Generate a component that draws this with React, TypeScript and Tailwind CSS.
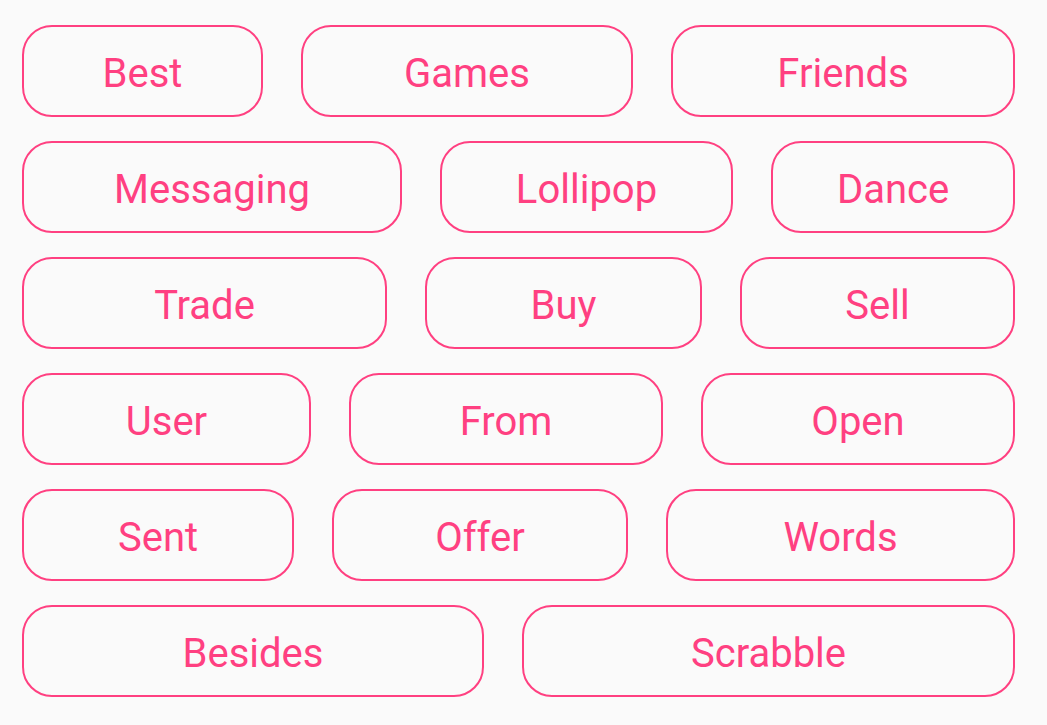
const rows: { label: string; w: string }[][] = [
  [
    { label: "Best", w: "w-[241px]" },
    { label: "Games", w: "w-[332px]" },
    { label: "Friends", w: "w-[344px]" },
  ],
  [
    { label: "Messaging", w: "w-[380px]" },
    { label: "Lollipop", w: "w-[293px]" },
    { label: "Dance", w: "w-[244px]" },
  ],
  [
    { label: "Trade", w: "w-[365px]" },
    { label: "Buy", w: "w-[277px]" },
    { label: "Sell", w: "w-[275px]" },
  ],
  [
    { label: "User", w: "w-[289px]" },
    { label: "From", w: "w-[314px]" },
    { label: "Open", w: "w-[314px]" },
  ],
  [
    { label: "Sent", w: "w-[272px]" },
    { label: "Offer", w: "w-[296px]" },
    { label: "Words", w: "w-[349px]" },
  ],
  [
    { label: "Besides", w: "w-[462px]" },
    { label: "Scrabble", w: "w-[493px]" },
  ],
];

export default function App() {
  return (
    <div className="min-h-screen bg-[#fafafa] pl-[22px] pt-[25px] font-['Roboto',sans-serif]">
      <div className="flex flex-col gap-[24px]">
        {rows.map((row, i) => (
          <div key={i} className="flex gap-[38px]">
            {row.map((chip) => (
              <button
                key={chip.label}
                className={`${chip.w} h-[92px] rounded-[30px] border-2 border-[#ff4081] text-[#ff4081] text-[40px] leading-none pt-[6px] flex items-center justify-center`}
              >
                {chip.label}
              </button>
            ))}
          </div>
        ))}
      </div>
    </div>
  );
}
